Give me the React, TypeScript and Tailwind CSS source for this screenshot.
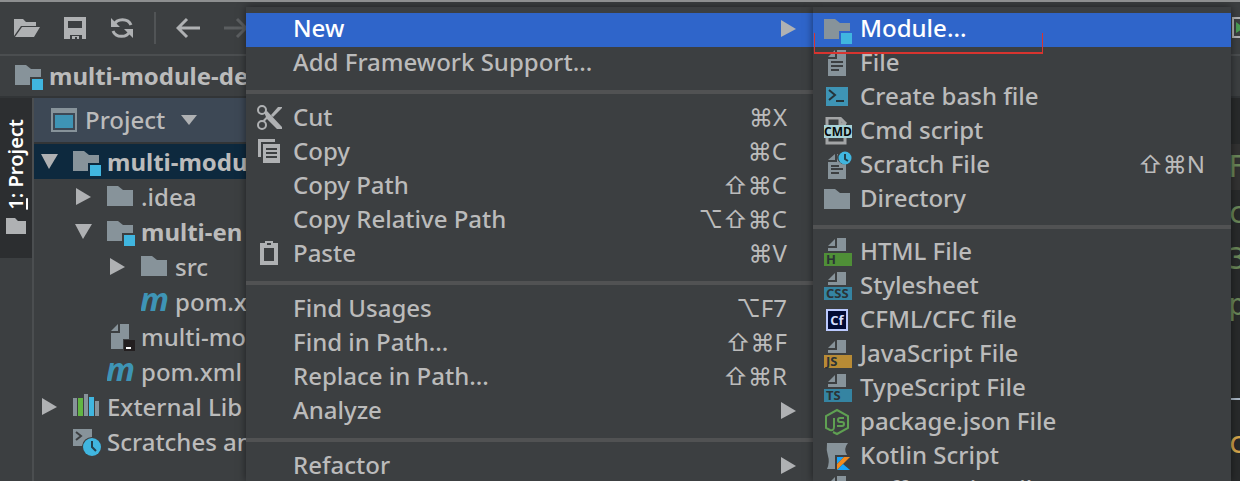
import React from 'react';
import clsx from 'clsx';

type IconName =
    | 'folder' | 'module' | 'file' | 'bash' | 'cmd' | 'scratch' | 'html' | 'css' | 'cfml' | 'js' | 'ts'
    | 'node' | 'kotlin' | 'coffee' | 'cut' | 'copy' | 'paste' | 'maven' | 'iml' | 'libs' | 'scratches';

interface MenuEntry {
    label: string;
    icon?: IconName;
    keys?: string;
    submenu?: boolean;
    active?: boolean;
}

interface TreeNode {
    label: string;
    icon: IconName;
    depth: number;
    arrow?: 'open' | 'closed';
    bold?: boolean;
    selected?: boolean;
}

const contextMenu: MenuEntry[][] = [
    [
        { label: 'New', submenu: true, active: true },
        { label: 'Add Framework Support...' },
    ],
    [
        { label: 'Cut', icon: 'cut', keys: '⌘X' },
        { label: 'Copy', icon: 'copy', keys: '⌘C' },
        { label: 'Copy Path', keys: '⇧⌘C' },
        { label: 'Copy Relative Path', keys: '⌥⇧⌘C' },
        { label: 'Paste', icon: 'paste', keys: '⌘V' },
    ],
    [
        { label: 'Find Usages', keys: '⌥F7' },
        { label: 'Find in Path...', keys: '⇧⌘F' },
        { label: 'Replace in Path...', keys: '⇧⌘R' },
        { label: 'Analyze', submenu: true },
    ],
    [{ label: 'Refactor', submenu: true }],
];

const newMenu: MenuEntry[][] = [
    [
        { label: 'Module...', icon: 'module', active: true },
        { label: 'File', icon: 'file' },
        { label: 'Create bash file', icon: 'bash' },
        { label: 'Cmd script', icon: 'cmd' },
        { label: 'Scratch File', icon: 'scratch', keys: '⇧⌘N' },
        { label: 'Directory', icon: 'folder' },
    ],
    [
        { label: 'HTML File', icon: 'html' },
        { label: 'Stylesheet', icon: 'css' },
        { label: 'CFML/CFC file', icon: 'cfml' },
        { label: 'JavaScript File', icon: 'js' },
        { label: 'TypeScript File', icon: 'ts' },
        { label: 'package.json File', icon: 'node' },
        { label: 'Kotlin Script', icon: 'kotlin' },
        { label: 'CoffeeScript File', icon: 'coffee' },
    ],
];

const tree: TreeNode[] = [
    { label: 'multi-modu', icon: 'module', depth: 0, arrow: 'open', bold: true, selected: true },
    { label: '.idea', icon: 'folder', depth: 1, arrow: 'closed' },
    { label: 'multi-en', icon: 'module', depth: 1, arrow: 'open', bold: true },
    { label: 'src', icon: 'folder', depth: 2, arrow: 'closed' },
    { label: 'pom.xml', icon: 'maven', depth: 2 },
    { label: 'multi-mo', icon: 'iml', depth: 1 },
    { label: 'pom.xml', icon: 'maven', depth: 1 },
    { label: 'External Lib', icon: 'libs', depth: 0, arrow: 'closed' },
    { label: 'Scratches an', icon: 'scratches', depth: 0 },
];

const iconText = { fontFamily: '"Open Sans", sans-serif', fontWeight: 700 };

// page with a folded corner and a coloured language tag under it
const TaggedFile = ({ tag, fill }: { tag: string; fill: string }) => (
    <>
        <path d="M13 0h9v13H4v-3h9z" fill="#87939a" />
        <path d="M4 8l7-7v7z" fill="#87939a" />
        <path d="M0 15h28v13H0z" fill={fill} />
        <text x="2" y="26" fontSize="13" fill="#2b3336" style={iconText}>{tag}</text>
    </>
);

const glyphs: Record<IconName, React.ReactNode> = {
    folder: <path d="M0 4h11l5 4h10v16H0z" fill="#87939a" />,
    module: (
        <>
            <path d="M0 4h11l5 4h10v8H15v8H0z" fill="#87939a" />
            <path d="M17 18h11v11H17z" fill="#40b6e0" />
        </>
    ),
    file: (
        <>
            <path d="M13 1h9v26H4V10h9z" fill="#87939a" />
            <path d="M4 8l7-7v7z" fill="#87939a" />
            <path d="M7 13h12M7 17h12M7 21h8" stroke="#3c3f41" strokeWidth="2" />
        </>
    ),
    bash: (
        <>
            <path d="M2 4h22v19H2z" fill="#3e94b5" />
            <path d="M5 7l6 5-6 5M12 18h8" stroke="#26343a" strokeWidth="2" fill="none" />
        </>
    ),
    cmd: (
        <>
            <path d="M3 8V1h13l6 6M16 1v6h6M3 19v7h18v-7" stroke="#a3a5a6" strokeWidth="3" fill="none" />
            <path d="M0 8h28v13H0z" fill="#a9d3d8" />
            <text x="14" y="19" fontSize="12" textAnchor="middle" fill="#050808" style={iconText}>CMD</text>
        </>
    ),
    scratch: (
        <>
            <path d="M4 9l7-6v6zM4 11h9V3h1a7 7 0 0 0 8 10v15H4z" fill="#87939a" />
            <path d="M7 15h8M7 18h12M7 22h8" stroke="#3c3f41" strokeWidth="2" />
            <circle cx="21" cy="7" r="6.5" fill="#40b6e0" />
            <path d="M21 3v5l3 2" stroke="#23414e" strokeWidth="2" fill="none" />
        </>
    ),
    html: <TaggedFile tag="H" fill="#4f8f37" />,
    css: <TaggedFile tag="CSS" fill="#3584a2" />,
    cfml: (
        <>
            <path d="M3 4h20v20H3z" fill="#020b35" stroke="#bccaff" strokeWidth="2" />
            <text x="13" y="19" fontSize="13" textAnchor="middle" fill="#d5deff" style={iconText}>Cf</text>
        </>
    ),
    js: <TaggedFile tag="JS" fill="#b88b35" />,
    ts: <TaggedFile tag="TS" fill="#3584a2" />,
    node: (
        <>
            <path d="M9 24l4 2 11-6V8L13 2 2 8v12l4 2q4 1 4-3v-9" stroke="#5fa052" strokeWidth="2" fill="none" />
            <path d="M20 10h-4q-2 0-2 2t2 2h2q2 0 2 2t-2 2h-5" stroke="#5fa052" strokeWidth="2" fill="none" />
        </>
    ),
    kotlin: (
        <>
            <path d="M3 1h21q-5 6-1 12H11v14H3q3-7 1-13T3 1z" fill="#87939a" />
            <path d="M13 15h7l-7 7z" fill="#18a3fa" />
            <path d="M20 15h6L13 28v-6z" fill="#f28a1e" />
            <path d="M19 22l7 6H13z" fill="#18a3fa" />
        </>
    ),
    coffee: <TaggedFile tag="CS" fill="#b88b35" />,
    cut: (
        <>
            <circle cx="5" cy="6" r="4" stroke="#afb1b3" strokeWidth="2" fill="none" />
            <circle cx="5" cy="21" r="4" stroke="#afb1b3" strokeWidth="2" fill="none" />
            <path d="M7 8l3-1 15 16v2h-5L10 15l-3 3-1-2 3-3zM14 11l7-8h4v1l-9 9z" fill="#afb1b3" />
        </>
    ),
    copy: (
        <>
            <path d="M1 1h17v3H4v15H1z" fill="#afb1b3" />
            <path d="M6 6h17v19H6z" fill="#afb1b3" />
            <path d="M9 11h11M9 15h11M9 19h11" stroke="#3c3f41" strokeWidth="2" />
        </>
    ),
    paste: (
        <path
            d="M3 3h5V1h8v2h5v22H3zM7 8v13h10V8zM10 3v2h4V3z"
            fill="#afb1b3"
            fillRule="evenodd"
        />
    ),
    maven: (
        <text x="-1" y="24" fontSize="32" fill="#3e94b5" fontStyle="italic" style={iconText}>m</text>
    ),
    iml: (
        <>
            <path d="M13 2h9v15h-6v10H4V11h9z" fill="#87939a" />
            <path d="M4 9l7-7v7z" fill="#87939a" />
            <path d="M17 18h11v11H17z" fill="#231f20" />
            <path d="M19 26h5" stroke="#ffffff" strokeWidth="2" />
        </>
    ),
    libs: (
        <>
            <path d="M0 6h4v18H0zM11 2h4v22h-4zM22 9h4v15h-4z" fill="#87939a" />
            <path d="M5 6h5v18H5z" fill="#62b543" />
            <path d="M16 5h5v19h-5z" fill="#40b6e0" />
        </>
    ),
    scratches: (
        <>
            <path d="M0 2h19v8a10 10 0 0 0-10 9H0z" fill="#87939a" />
            <path d="M3 5l5 4-5 4" stroke="#3c3f41" strokeWidth="2" fill="none" />
            <circle cx="19" cy="20" r="9" fill="#40b6e0" />
            <path d="M19 14v6l4 4" stroke="#23414e" strokeWidth="2" fill="none" />
        </>
    ),
};

const Icon = ({ name }: { name: IconName }) => (
    <svg width="30" height="30" viewBox="0 0 30 30" aria-hidden="true">{glyphs[name]}</svg>
);

const Triangle = ({ open = false }: { open?: boolean }) => (
    <svg width="17" height="17" viewBox="0 0 17 17" fill="#afb1b3" aria-hidden="true">
        <path d={open ? 'M0 1h17l-9 15z' : 'M1 0l15 9-15 8z'} />
    </svg>
);

const MenuItem = ({ label, icon, keys, submenu, active }: MenuEntry) => (
    <button
        type="button"
        role="menuitem"
        className={clsx(
            'flex h-[34px] w-full items-center pl-[11px] text-left',
            submenu ? 'pr-4' : 'pr-[26px]',
            active && 'bg-[#2f65ca] text-white',
        )}
    >
        <span className="w-9 shrink-0">{icon && <Icon name={icon} />}</span>
        <span className="flex-1 pb-1 font-medium whitespace-nowrap">{label}</span>
        {keys && <span className="pb-1 whitespace-nowrap">{keys}</span>}
        {submenu && <span className="pb-1"><Triangle /></span>}
    </button>
);

interface MenuProps {
    groups: MenuEntry[][];
    label: string;
    className: string;
    compact?: boolean;
}

const Menu = ({ groups, label, className, compact }: MenuProps) => (
    <div
        role="menu"
        aria-label={label}
        className={clsx('min-w-0 bg-[#3c3f41] pt-1.5 shadow-[0_0_8px_rgba(0,0,0,0.5)]', className)}
    >
        {groups.map((group, i) => (
            <React.Fragment key={i}>
                {i > 0 && (
                    <div role="separator" className={clsx('flex items-center', compact ? 'h-[19px]' : 'h-[21px]')}>
                        <div className="h-1 w-full bg-[#515253]" />
                    </div>
                )}
                {group.map((item) => <MenuItem key={item.label} {...item} />)}
            </React.Fragment>
        ))}
    </div>
);

const Toolbar = () => (
    <div className="flex h-[54px] items-center border-b-2 border-[#4b4e50] pl-3.5 text-[#afb1b3]">
        <div className="flex flex-1 items-center gap-6">
            <button type="button" aria-label="Open">
                <svg width="26" height="24" viewBox="0 0 26 24" fill="currentColor">
                    <path d="M0 3h9l3 3h10v4H7L0 20zM8 11h18l-6 10H1z" />
                </svg>
            </button>
            <button type="button" aria-label="Save All">
                <svg width="22" height="24" viewBox="0 0 22 24" fill="currentColor" fillRule="evenodd">
                    <path d="M0 1h22v22h-4v-4H6v4H0zM4 5v7h14V5zM8 20h7v3h-2v-2h-2v2H8z" />
                </svg>
            </button>
            <button type="button" aria-label="Synchronize">
                <svg width="24" height="24" viewBox="0 0 24 24" fill="none" stroke="currentColor" strokeWidth="3">
                    <path d="M4 9a9 8 0 0 1 17 0M20 15a9 8 0 0 1-17 0" />
                    <path d="M1 2v9h9zM23 22v-9h-9z" fill="currentColor" stroke="none" />
                </svg>
            </button>
            <div className="-mx-1 h-8 w-0.5 bg-[#515456]" />
            <button type="button" aria-label="Back">
                <svg width="24" height="24" viewBox="0 0 24 24" fill="none" stroke="currentColor" strokeWidth="3">
                    <path d="M24 12H3M11 3l-9 9 9 9" />
                </svg>
            </button>
            <button type="button" aria-label="Forward" className="text-[#5b5e60]">
                <svg width="24" height="24" viewBox="0 0 24 24" fill="none" stroke="currentColor" strokeWidth="3">
                    <path d="M0 12h21M13 3l9 9-9 9" />
                </svg>
            </button>
        </div>
        <button type="button" aria-label="Run" className="w-[9px] overflow-hidden">
            <svg width="9" height="24" viewBox="0 0 9 24">
                <path d="M9 2H2v19h7" stroke="#afb1b3" strokeWidth="2" fill="none" />
                <path d="M5 6l8 6-8 5z" fill="#499c54" />
            </svg>
        </button>
    </div>
);

const ProjectPanel = () => (
    <div className="min-w-0 flex-1 border-l-2 border-[#4b4e50]">
        <div className="flex h-[46px] items-center border-b-2 border-[#323537] bg-[#3d4855] pl-[17px]">
            <svg width="26" height="24" viewBox="0 0 26 24" className="mr-2">
                <path d="M0 0h26v24H0zM2 5v17h22V5z" fill="#87939a" fillRule="evenodd" />
                <path d="M4 7h18v13H4z" fill="#3e94b5" />
            </svg>
            <span className="mr-4 font-medium">Project</span>
            <svg width="16" height="10" viewBox="0 0 16 10" fill="#afb1b3"><path d="M0 0h16l-8 10z" /></svg>
        </div>
        <ul role="tree" aria-label="Project">
            {tree.map((node, i) => (
                <li
                    key={i}
                    role="treeitem"
                    aria-selected={!!node.selected}
                    className={clsx(
                        'flex h-[35px] items-center whitespace-nowrap',
                        node.depth === 0 && 'pl-[7px]',
                        node.depth === 1 && 'pl-[41px]',
                        node.depth === 2 && 'pl-[75px]',
                        node.selected && 'bg-[#0d293e]',
                        node.bold ? 'font-bold' : 'font-medium',
                    )}
                >
                    <span className="w-8 shrink-0">
                        {node.arrow && <Triangle open={node.arrow === 'open'} />}
                    </span>
                    <span className="w-[34px] shrink-0"><Icon name={node.icon} /></span>
                    <span>{node.label}</span>
                </li>
            ))}
        </ul>
    </div>
);

const Editor = () => (
    <div className="w-[9px] shrink-0 overflow-hidden bg-[#282a2b] pt-[46px] indent-[-3px] font-['DejaVu_Sans_Mono',monospace] text-3xl/[46px] text-[#6a8759]">
        <div className="bg-[#323232]">F</div>
        <div>c</div>
        <div>3</div>
        <div>p</div>
        <div className="h-[46px]" />
        <div className="text-[#a9b7c6]">—</div>
        <div className="text-[#d5a64c]">c</div>
    </div>
);

const App = () => {
    return (
        <div className="relative flex h-screen flex-col overflow-hidden border-t-2 border-[#8d8f90] bg-[#3c3f41] font-['Noto_Sans','Inter','DejaVu_Sans',sans-serif] text-[24px]/[30px] text-[#bbbbbb]">
            <Toolbar />
            <div className="flex h-[42px] shrink-0 items-center gap-1 border-b-2 border-[#323537] pl-[15px] font-bold">
                <Icon name="module" />
                <span>multi-module-de</span>
            </div>
            <div className="flex min-h-0 flex-1">
                <div className="w-8 shrink-0">
                    <button
                        type="button"
                        className="flex h-40 w-full flex-col items-center justify-end gap-2 bg-[#2c2e30] pb-6 text-xl font-semibold text-white"
                    >
                        <span className="rotate-180 whitespace-nowrap [writing-mode:vertical-rl]">
                            <u>1</u>: Project
                        </span>
                        <svg width="20" height="16" viewBox="0 0 20 16" fill="#afb1b3" className="shrink-0">
                            <path d="M0 0h9l3 3h8v13H0z" />
                        </svg>
                    </button>
                </div>
                <ProjectPanel />
                <Editor />
            </div>

            <div className="absolute inset-0 flex pt-[5px] pr-[9px] pl-[246px]">
                <Menu groups={contextMenu} label="Project context menu" className="flex-[567]" />
                <div className="relative flex min-w-0 flex-[418]">
                    <Menu groups={newMenu} label="New" className="flex-1" compact />
                    <div className="pointer-events-none absolute top-[26px] left-px h-[21px] w-[229px] border-x border-b-2 border-[#d8342f]" />
                </div>
            </div>
        </div>
    );
};

export default App;
